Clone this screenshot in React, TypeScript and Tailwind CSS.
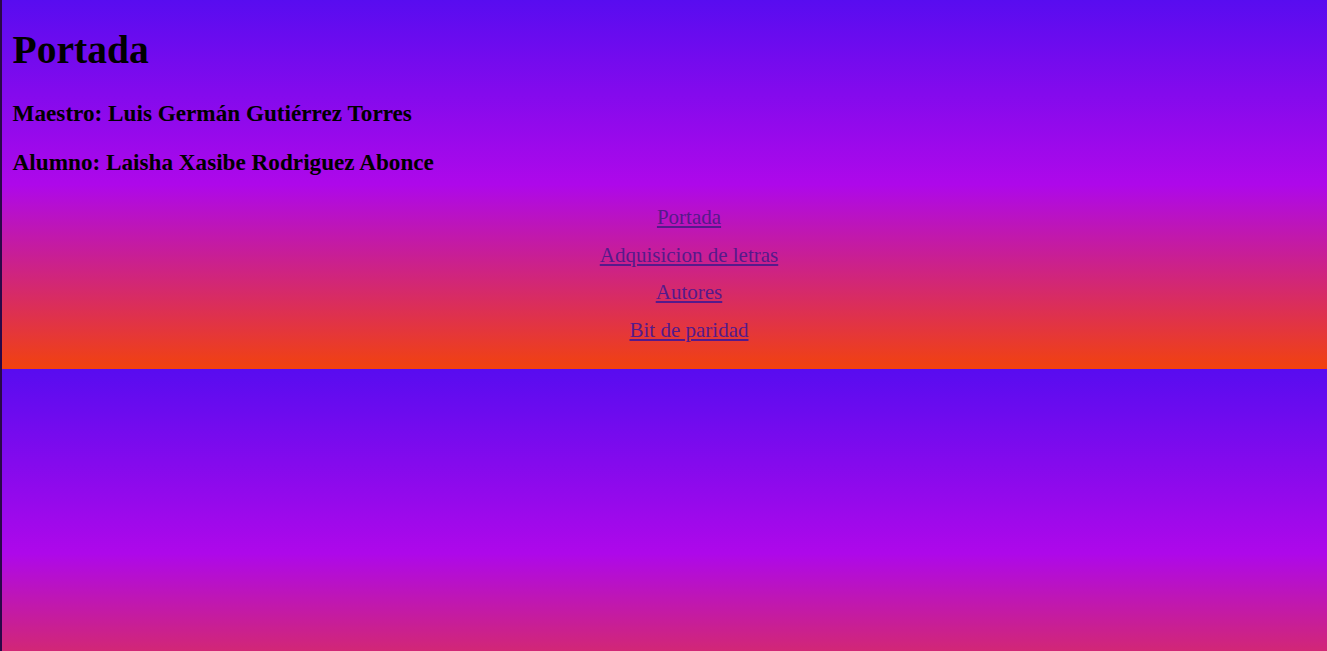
import React from 'react';

const links = ['Portada', 'Adquisicion de letras', 'Autores', 'Bit de paridad'];

export default function App() {
  return (
    <div className="min-h-screen border-l-2 border-[#2a0848] bg-[linear-gradient(to_bottom,#580cf0,#ae08ea_50%,#f2420e)] bg-[length:100%_369px] bg-repeat font-['Liberation_Serif',serif] text-black">
      <div className="pl-[10.6px] pr-[9.6px]">
        <h1 className="pt-[28px] text-[39.5px] font-bold leading-[45px]">Portada</h1>
        <h3 className="mt-[27px] text-[23.2px] font-bold leading-[27px]">
          Maestro: Luis Germán Gutiérrez Torres
        </h3>
        <h3 className="mt-[22px] text-[23.2px] font-bold leading-[27px]">
          Alumno: Laisha Xasibe Rodriguez Abonce
        </h3>
        <ul className="mt-[23px] pl-[48px] text-center">
          {links.map((l) => (
            <li key={l} className="text-[21px] leading-[37.7px]">
              <a href="#" className="text-[#551a8b] underline">
                {l}
              </a>
            </li>
          ))}
        </ul>
      </div>
    </div>
  );
}
